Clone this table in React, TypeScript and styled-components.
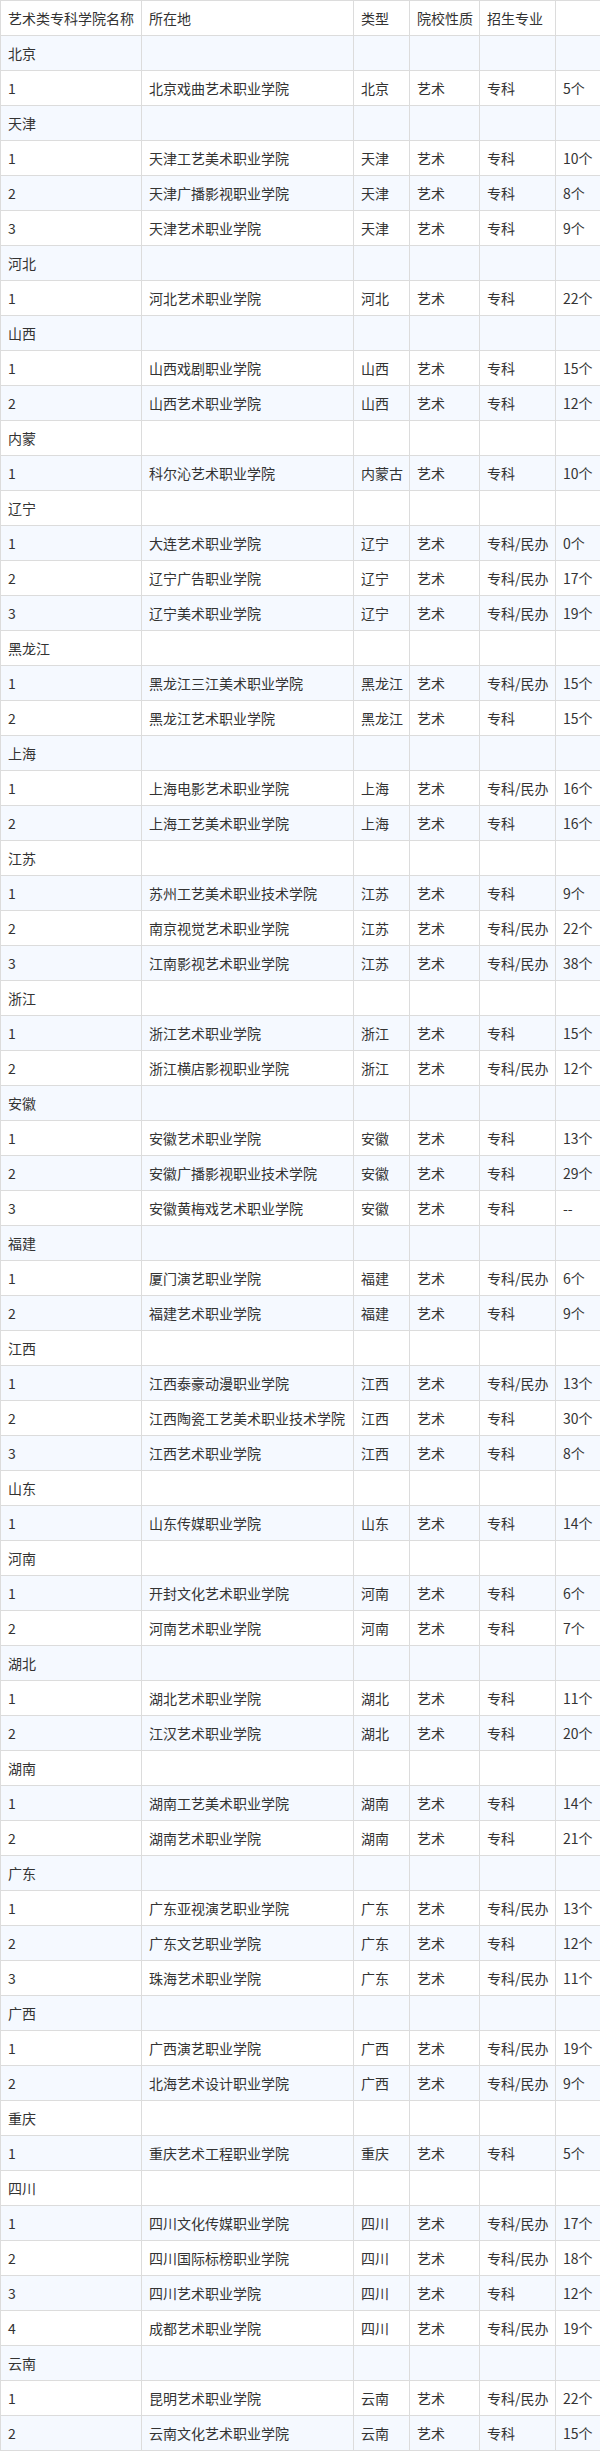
import React from "react";
import styled, { createGlobalStyle } from "styled-components";

const Global = createGlobalStyle`
  html, body { margin: 0; padding: 0; background: #fff; overflow-x: hidden; }
  body { font-family: "Noto Sans CJK SC", "Noto Sans", sans-serif; }
`;

const Table = styled.table`
  border-collapse: collapse;
  table-layout: fixed;
  width: 601px;
  font-size: 14px;
  color: #333;
`;

const Row = styled.tr`
  &:nth-child(even) { background: #f5f9ff; }
`;

const Cell = styled.td`
  height: 35px;
  box-sizing: border-box;
  padding: 0 7px;
  border: 1px solid #dcdcdc;
  white-space: nowrap;
  overflow: hidden;
  vertical-align: middle;
  line-height: 20px;
`;

type School = [string, string, string, string, string];
type Group = { name: string; rows: School[] };

const D = (n: string, loc: string, nat: string, cnt: string): School => [n, loc, "艺术", nat, cnt];

const groups: Group[] = [
  { name: "北京", rows: [D("北京戏曲艺术职业学院", "北京", "专科", "5个")] },
  { name: "天津", rows: [D("天津工艺美术职业学院", "天津", "专科", "10个"), D("天津广播影视职业学院", "天津", "专科", "8个"), D("天津艺术职业学院", "天津", "专科", "9个")] },
  { name: "河北", rows: [D("河北艺术职业学院", "河北", "专科", "22个")] },
  { name: "山西", rows: [D("山西戏剧职业学院", "山西", "专科", "15个"), D("山西艺术职业学院", "山西", "专科", "12个")] },
  { name: "内蒙", rows: [D("科尔沁艺术职业学院", "内蒙古", "专科", "10个")] },
  { name: "辽宁", rows: [D("大连艺术职业学院", "辽宁", "专科/民办", "0个"), D("辽宁广告职业学院", "辽宁", "专科/民办", "17个"), D("辽宁美术职业学院", "辽宁", "专科/民办", "19个")] },
  { name: "黑龙江", rows: [D("黑龙江三江美术职业学院", "黑龙江", "专科/民办", "15个"), D("黑龙江艺术职业学院", "黑龙江", "专科", "15个")] },
  { name: "上海", rows: [D("上海电影艺术职业学院", "上海", "专科/民办", "16个"), D("上海工艺美术职业学院", "上海", "专科", "16个")] },
  { name: "江苏", rows: [D("苏州工艺美术职业技术学院", "江苏", "专科", "9个"), D("南京视觉艺术职业学院", "江苏", "专科/民办", "22个"), D("江南影视艺术职业学院", "江苏", "专科/民办", "38个")] },
  { name: "浙江", rows: [D("浙江艺术职业学院", "浙江", "专科", "15个"), D("浙江横店影视职业学院", "浙江", "专科/民办", "12个")] },
  { name: "安徽", rows: [D("安徽艺术职业学院", "安徽", "专科", "13个"), D("安徽广播影视职业技术学院", "安徽", "专科", "29个"), D("安徽黄梅戏艺术职业学院", "安徽", "专科", "--")] },
  { name: "福建", rows: [D("厦门演艺职业学院", "福建", "专科/民办", "6个"), D("福建艺术职业学院", "福建", "专科", "9个")] },
  { name: "江西", rows: [D("江西泰豪动漫职业学院", "江西", "专科/民办", "13个"), D("江西陶瓷工艺美术职业技术学院", "江西", "专科", "30个"), D("江西艺术职业学院", "江西", "专科", "8个")] },
  { name: "山东", rows: [D("山东传媒职业学院", "山东", "专科", "14个")] },
  { name: "河南", rows: [D("开封文化艺术职业学院", "河南", "专科", "6个"), D("河南艺术职业学院", "河南", "专科", "7个")] },
  { name: "湖北", rows: [D("湖北艺术职业学院", "湖北", "专科", "11个"), D("江汉艺术职业学院", "湖北", "专科", "20个")] },
  { name: "湖南", rows: [D("湖南工艺美术职业学院", "湖南", "专科", "14个"), D("湖南艺术职业学院", "湖南", "专科", "21个")] },
  { name: "广东", rows: [D("广东亚视演艺职业学院", "广东", "专科/民办", "13个"), D("广东文艺职业学院", "广东", "专科", "12个"), D("珠海艺术职业学院", "广东", "专科/民办", "11个")] },
  { name: "广西", rows: [D("广西演艺职业学院", "广西", "专科/民办", "19个"), D("北海艺术设计职业学院", "广西", "专科/民办", "9个")] },
  { name: "重庆", rows: [D("重庆艺术工程职业学院", "重庆", "专科", "5个")] },
  { name: "四川", rows: [D("四川文化传媒职业学院", "四川", "专科/民办", "17个"), D("四川国际标榜职业学院", "四川", "专科/民办", "18个"), D("四川艺术职业学院", "四川", "专科", "12个"), D("成都艺术职业学院", "四川", "专科/民办", "19个")] },
  { name: "云南", rows: [D("昆明艺术职业学院", "云南", "专科/民办", "22个"), D("云南文化艺术职业学院", "云南", "专科", "15个")] },
];

const widths = [141, 212, 56, 70, 76, 46];

export default function App() {
  const body: React.ReactNode[] = [];
  groups.forEach((g) => {
    body.push(
      <Row key={g.name}>
        <Cell>{g.name}</Cell>
        <Cell />
        <Cell />
        <Cell />
        <Cell />
        <Cell />
      </Row>
    );
    g.rows.forEach((r, i) => {
      body.push(
        <Row key={g.name + i}>
          <Cell>{i + 1}</Cell>
          {r.map((v, j) => (
            <Cell key={j}>{v}</Cell>
          ))}
        </Row>
      );
    });
  });
  return (
    <>
      <Global />
      <Table>
        <colgroup>
          {widths.map((w, i) => (
            <col key={i} style={{ width: w }} />
          ))}
        </colgroup>
        <tbody>
          <Row>
            <Cell>艺术类专科学院名称</Cell>
            <Cell>所在地</Cell>
            <Cell>类型</Cell>
            <Cell>院校性质</Cell>
            <Cell>招生专业</Cell>
            <Cell />
          </Row>
          {body}
        </tbody>
      </Table>
    </>
  );
}
